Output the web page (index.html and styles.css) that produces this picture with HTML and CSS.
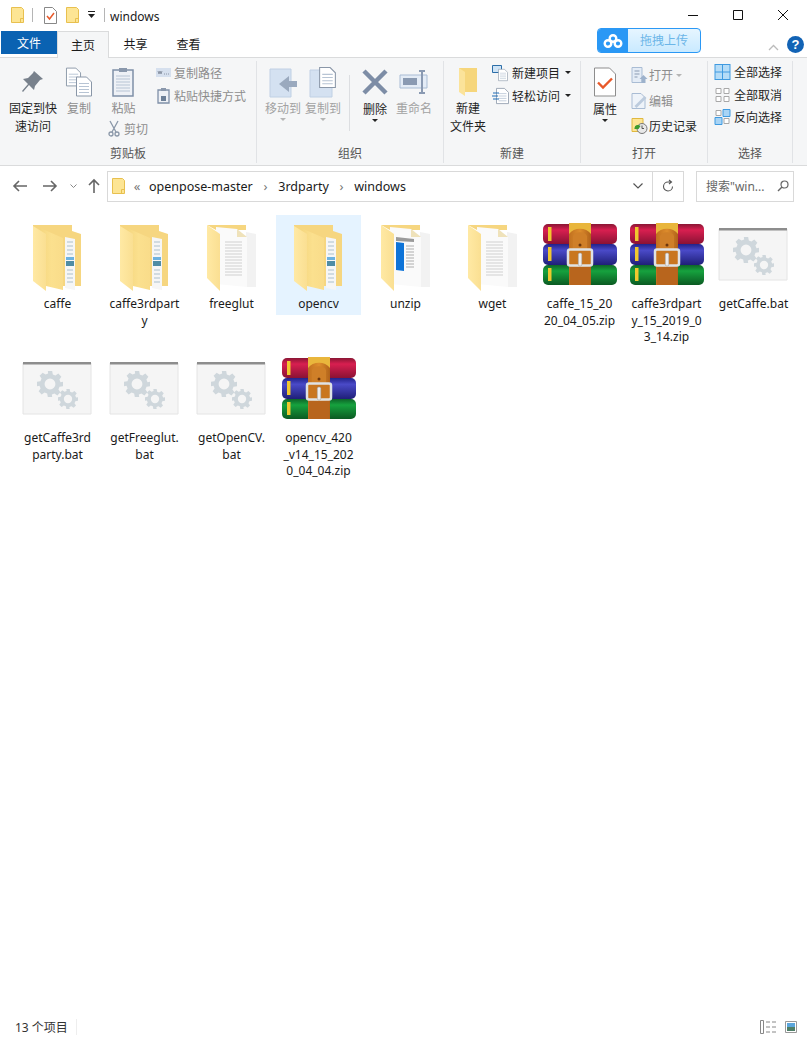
FILE: index.html
```html
<!DOCTYPE html>
<html lang="zh">
<head>
  <meta charset="UTF-8" />
  <title>windows</title>
  <link rel="stylesheet" href="styles.css">
</head>
<body>
<svg class="defs" width="0" height="0">
  <defs>
    <linearGradient id="gFolder" x1="0" y1="0" x2="1" y2="0"><stop offset="0" stop-color="#ffe9a4"/><stop offset="1" stop-color="#fadf92"/></linearGradient>
    <linearGradient id="gPanel" x1="0" y1="0" x2="1" y2="0"><stop offset="0" stop-color="#f5d67e"/><stop offset=".5" stop-color="#fbe08e"/><stop offset="1" stop-color="#f9dc8a"/></linearGradient>
    <linearGradient id="gRed" x1="0" y1="0" x2="0" y2="1"><stop offset="0" stop-color="#8a1634"/><stop offset=".3" stop-color="#d81f50"/><stop offset="1" stop-color="#8a1234"/></linearGradient>
    <linearGradient id="gBlue" x1="0" y1="0" x2="0" y2="1"><stop offset="0" stop-color="#22228a"/><stop offset=".3" stop-color="#4a4ac8"/><stop offset="1" stop-color="#1f1f78"/></linearGradient>
    <linearGradient id="gGreen" x1="0" y1="0" x2="0" y2="1"><stop offset="0" stop-color="#0e6428"/><stop offset=".3" stop-color="#16a23e"/><stop offset="1" stop-color="#0b5a22"/></linearGradient>
    <linearGradient id="gBelt" x1="0" y1="0" x2="1" y2="0"><stop offset="0" stop-color="#c0701f"/><stop offset=".5" stop-color="#dd8c2c"/><stop offset="1" stop-color="#b0621a"/></linearGradient>

    <symbol id="tinyFolder" viewBox="0 0 13 16">
      <path d="M.5.5h10l2 2v13H.5z" fill="#fde594" stroke="#e8c04f"/>
      <path d="M9.5 15.5v-4h3" fill="none" stroke="#e8c04f"/>
    </symbol>

    <symbol id="folderDocs" viewBox="0 0 74 64">
      <path d="M12 3h39v6l9 3v52H42L12 50z" fill="#f6d680"/>
      <path d="M44 15l10 2v51l-10-2z" fill="#f6f6f6"/>
      <path d="M46 20h6M46 24h6M46 28h6M46 32h6M46 48h6M46 52h6M46 56h6M46 60h6" stroke="#c5d2da" stroke-width="1.300"/>
      <path d="M45 35h8v3h-8z" fill="#6db2e0"/>
      <path d="M45 39h8v5h-8z" fill="#4f8ca4"/>
      <path d="M19 6l23 10v52l-17-4z" fill="url(#gPanel)"/>
      <path d="M12 4l13 8v57L12 59z" fill="url(#gFolder)"/>
    </symbol>

    <symbol id="folderPlain" viewBox="0 0 74 64">
      <path d="M12 3h39v5h-30z" fill="#f6d680"/>
      <path d="M51 10l10 2v53H51z" fill="#f2f2f2"/>
      <path d="M21 5l21 2 10 8v50l-31-3z" fill="#fafafa"/>
      <path d="M42 7v8h10z" fill="#efe2ba"/>
      <path d="M30 20h17M30 23h17M30 26h17M30 29h17M30 32h17M30 35h17M30 38h17M30 41h17M30 44h17M30 47h17M30 50h17M30 53h17" stroke="#cfcfcf" stroke-width="1.100"/>
      <path d="M12 3l13 9v57L12 56z" fill="url(#gFolder)"/>
    </symbol>

    <symbol id="folderBlue" viewBox="0 0 74 64">
      <path d="M12 3h39v5h-30z" fill="#f6d680"/>
      <path d="M51 10l10 2v53H51z" fill="#f2f2f2"/>
      <path d="M21 5l21 2 10 8v50l-31-3z" fill="#fafafa"/>
      <path d="M42 7v8h10z" fill="#efe2ba"/>
      <path d="M27 15l18 2v3l-18-1z" fill="#9a9a9a"/>
      <path d="M27 20l8 1v28l-8-1z" fill="#0e74d8"/>
      <path d="M37 24h8M37 27h8M37 30h8M37 33h8M37 36h8M37 39h8M37 42h8M37 45h8" stroke="#c8c8c8" stroke-width="1.300"/>
      <path d="M12 3l13 9v57L12 56z" fill="url(#gFolder)"/>
    </symbol>

    <symbol id="rar" viewBox="0 0 74 64">
      <rect x="0" y="2" width="74" height="20" rx="5" fill="url(#gRed)"/>
      <rect x="0" y="22" width="74" height="21" rx="5" fill="url(#gBlue)"/>
      <rect x="0" y="43" width="74" height="20" rx="5" fill="url(#gGreen)"/>
      <path d="M5 5h3.500v14H5zM5 25h3.500v14H5zM5 46h3.500v13H5z" fill="#f0c82e"/>
      <path d="M26 1h22v62H26z" fill="url(#gBelt)"/>
      <path d="M26 1h22v11c-5-7-17-7-22 0z" fill="#e9b63c"/>
      <path d="M30 14c2-5 12-5 14 0v13H30z" fill="#cf7f28"/>
      <circle cx="37" cy="23" r="1.500" fill="#6d360c"/>
      <rect x="25" y="27.500" width="24" height="16" rx="2" fill="#c9761f" stroke="#dfe2e4" stroke-width="2.500"/>
      <rect x="35.300" y="31" width="3.500" height="13" rx="1.500" fill="#ececec" stroke="#9a9a9a" stroke-width=".5"/>
      <path d="M27 45h20v18H27z" fill="#b8651d"/>
    </symbol>

    <symbol id="gear" viewBox="-12 -12 24 24">
      <path d="M-2-12h4l.6 3.2 2.4 1 2.7-1.8 2.8 2.8-1.8 2.700 1 2.400L12-2v4l-3.200.6-1 2.400 1.800 2.700-2.800 2.800-2.700-1.800-2.400 1L2 12h-4l-.6-3.200-2.400-1-2.700 1.800-2.800-2.800 1.800-2.700-1-2.400L-12 2v-4l3.200-.6 1-2.400-1.800-2.700 2.800-2.800 2.700 1.800 2.400-1zM0-5a5 5 0 1 0 0 10A5 5 0 0 0 0-5z" fill="#cfd7dc" fill-rule="evenodd"/>
    </symbol>

    <symbol id="bat" viewBox="0 0 74 64">
      <path d="M2 7h68v51H2z" fill="#f5f5f5" stroke="#e4e4e4"/>
      <path d="M2 6h68v2.500H2z" fill="#8d8d8d"/>
      <use href="#gear" x="16" y="15" width="26" height="26"/>
      <use href="#gear" x="37" y="33" width="20" height="20"/>
    </symbol>

    <symbol id="paper" viewBox="0 0 16 20">
      <path d="M.5.5h10l5 5v14H.5z" fill="#fff" stroke="#8a97a8"/>
      <path d="M3 7h10M3 10h10M3 13h10M3 16h10" stroke="#b7c4d4"/>
    </symbol>
  </defs>
</svg>

<header class="titlebar">
  <svg class="ml-11" width="13" height="16"><use href="#tinyFolder"/></svg>
  <span class="tb-sep ml-8"></span>
  <svg class="ml-11" width="13" height="17" viewBox="0 0 13 17"><path d="M.5.5h8l4 4v12H.5z" fill="#fff" stroke="#888"/><path d="M3 9l2.500 3L10 6" fill="none" stroke="#e8592a" stroke-width="1.500"/></svg>
  <svg class="ml-9" width="13" height="16"><use href="#tinyFolder"/></svg>
  <svg class="ml-8" width="9" height="8" viewBox="0 0 9 8"><path d="M1 0h7v1H1zM1 3h7L4.500 7z" fill="#222"/></svg>
  <span class="tb-sep ml-8"></span>
  <span class="tb-title">windows</span>
  <div class="winctl">
    <svg width="10" height="10" viewBox="0 0 10 10"><path d="M0 5.500h10" stroke="#111"/></svg>
    <svg width="10" height="10" viewBox="0 0 10 10"><path d="M.5.500h9v9h-9z" fill="none" stroke="#111"/></svg>
    <svg width="10" height="10" viewBox="0 0 10 10"><path d="M0 0l10 10M10 0L0 10" stroke="#111"/></svg>
  </div>
</header>

<nav class="tabbar">
  <span class="tab tab-file">文件</span>
  <span class="tab tab-active">主页</span>
  <span class="tab">共享</span>
  <span class="tab">查看</span>
  <div class="tabbar-right">
    <div class="cloud">
      <span class="cloud-logo">
        <svg width="20" height="14" viewBox="0 0 20 14"><g fill="none" stroke="#fff" stroke-width="2.400"><circle cx="10" cy="4.500" r="3.300"/><circle cx="5" cy="9.500" r="3.300"/><circle cx="15" cy="9.500" r="3.300"/></g></svg>
      </span>
      <span class="cloud-text">拖拽上传</span>
    </div>
    <svg class="collapse" width="11" height="7" viewBox="0 0 11 7"><path d="M1 6l4.500-4.500L10 6" fill="none" stroke="#bbb" stroke-width="1.300"/></svg>
    <span class="help">?</span>
  </div>
</nav>

<section class="ribbon">
  <div class="group g-clip">
    <div class="group-body">
      <div class="big w-50">
        <svg class="big-ic" width="26" height="26" viewBox="0 0 26 26"><path d="M14 2l9 8-3 1-5 6-1 4-5-5-6 7-1-1 6-7-5-5 5-1 5-5z" fill="#78818c"/></svg>
        <span class="big-label dark">固定到快<br>速访问</span>
      </div>
      <div class="big w-42">
        <svg class="big-ic" width="26" height="30" viewBox="0 0 26 30"><use href="#paper" width="15" height="20"/><use href="#paper" x="10" y="9" width="16" height="21"/></svg>
        <span class="big-label">复制</span>
      </div>
      <div class="paste-col">
        <div class="big">
          <svg class="big-ic" width="22" height="30" viewBox="0 0 22 30"><path d="M1 3h20v26H1z" fill="#eef1f6" stroke="#7f90a8" stroke-width="1.500"/><path d="M7 1h8v4H7z" fill="#8a98ac"/><path d="M4 9h14M4 12h14M4 15h14M4 18h14M4 21h14M4 24h14" stroke="#b7c4d4"/></svg>
          <span class="big-label">粘贴</span>
        </div>
        <div class="small cut">
          <svg width="12" height="16" viewBox="0 0 12 16"><path d="M2 0l6 11M10 0L4 11" stroke="#8a97a8" stroke-width="1.300"/><circle cx="3" cy="13" r="2" fill="none" stroke="#8a97a8" stroke-width="1.300"/><circle cx="9" cy="13" r="2" fill="none" stroke="#8a97a8" stroke-width="1.300"/></svg>
          <span>剪切</span>
        </div>
      </div>
      <div class="small-col clip-small">
        <div class="small">
          <svg width="15" height="9" viewBox="0 0 15 9"><path d="M0 0h15v9H0z" fill="#d6e0ee"/><path d="M2 3l1 3 1-3 1 3 1-3M8 6h1M10 6h1M12 6h1" stroke="#7a8494" fill="none" stroke-width=".8"/></svg>
          <span>复制路径</span>
        </div>
        <div class="small">
          <svg width="13" height="16" viewBox="0 0 13 16"><path d="M1 2h11v13H1z" fill="#eef1f6" stroke="#7f90a8" stroke-width="1.300"/><path d="M4 0h5v3H4z" fill="#8a98ac"/><path d="M4 8h5v5H4z" fill="#6d8098"/></svg>
          <span>粘贴快捷方式</span>
        </div>
      </div>
    </div>
    <div class="group-label">剪贴板</div>
  </div>

  <div class="group g-org">
    <div class="group-body">
      <div class="big w-40">
        <svg class="big-ic" width="27" height="30" viewBox="0 0 27 30"><path d="M0 2h21v28H0z" fill="#d4e1f1" stroke="#c0d0e4"/><path d="M27 14h-8V9l-10 8 10 8v-5h8z" fill="#9aa9be"/></svg>
        <span class="big-label muted">移动到</span>
        <i class="caret caret-grey"></i>
      </div>
      <div class="big w-40">
        <svg class="big-ic" width="27" height="30" viewBox="0 0 27 30"><path d="M0 3h22v27H0z" fill="#d4e1f1" stroke="#c0d0e4"/><use href="#paper" x="9" y="0" width="17" height="21"/></svg>
        <span class="big-label muted">复制到</span>
        <i class="caret caret-grey"></i>
      </div>
      <span class="inner-sep"></span>
      <div class="big w-50">
        <svg class="big-ic" width="26" height="26" viewBox="0 0 26 26"><path d="M2 2l22 22M24 2L2 24" stroke="#7d8da6" stroke-width="4.500"/></svg>
        <span class="big-label dark lift">删除</span>
        <i class="caret"></i>
      </div>
      <div class="big w-28">
        <svg class="big-ic" width="28" height="24" viewBox="0 0 28 24"><path d="M0 5h27v13H0z" fill="#e4ecf6" stroke="#a9bcd4"/><path d="M3 8h14v7H3z" fill="#8a9ab2"/><path d="M19 1h6M19 23h6M22 1v22" stroke="#8a9ab2" stroke-width="2"/></svg>
        <span class="big-label muted">重命名</span>
      </div>
    </div>
    <div class="group-label">组织</div>
  </div>

  <div class="group g-new">
    <div class="group-body">
      <div class="big w-48">
        <svg class="big-ic" width="19" height="28" viewBox="0 0 19 28"><path d="M0 0h18v24H4z" fill="#f6d67c"/><path d="M0 0l6 4v24L0 24z" fill="#fbe39a"/></svg>
        <span class="big-label dark">新建<br>文件夹</span>
      </div>
      <div class="small-col new-small">
        <div class="small dark">
          <svg width="17" height="16" viewBox="0 0 17 16"><path d="M.5.500h9v7h-9z" fill="#cfe4f6" stroke="#2c6ea8"/><use href="#paper" x="6" y="4" width="10" height="12"/></svg>
          <span>新建项目</span><i class="caret"></i>
        </div>
        <div class="small dark">
          <svg width="17" height="16" viewBox="0 0 17 16"><use href="#paper" x="4" y="0" width="13" height="16"/><path d="M1 5h6M0 8h6M1 11h6" stroke="#1f6cb6"/></svg>
          <span>轻松访问</span><i class="caret"></i>
        </div>
      </div>
    </div>
    <div class="group-label">新建</div>
  </div>

  <div class="group g-open">
    <div class="group-body">
      <div class="big w-48">
        <svg class="big-ic" width="22" height="29" viewBox="0 0 22 29"><path d="M.5.500h15l6 6v22H.5z" fill="#fff" stroke="#8d8d8d"/><path d="M4 15l5 5 9-9" fill="none" stroke="#e8592a" stroke-width="2.400"/></svg>
        <span class="big-label dark lift">属性</span>
        <i class="caret"></i>
      </div>
      <div class="small-col open-small">
        <div class="small">
          <svg width="16" height="16" viewBox="0 0 16 16"><path d="M.5.500h10v15H.5z" fill="#e4ecf6" stroke="#a9bcd4"/><path d="M3 4h5M3 7h5M3 10h3" stroke="#8a9ab2"/><path d="M12 8l4 4h-2v4h-4v-4H8z" fill="#9db2cc"/></svg>
          <span>打开</span><i class="caret caret-grey"></i>
        </div>
        <div class="small">
          <svg width="16" height="16" viewBox="0 0 16 16"><path d="M.5.500h9l4 4v11H.5z" fill="#eef3f9" stroke="#a9bcd4"/><path d="M3 13L13 3l2 2L5 15z" fill="#bccbdd"/></svg>
          <span>编辑</span>
        </div>
        <div class="small dark">
          <svg width="16" height="16" viewBox="0 0 16 16"><path d="M.5.500h11v13H.5z" fill="#fde594" stroke="#e0b83f"/><circle cx="10.500" cy="10.500" r="5" fill="#e8e8e8" stroke="#777"/><path d="M10.500 7.500v3h2" fill="none" stroke="#555"/><path d="M3 10a3.500 3.500 0 0 1 6-2l-2 3H3z" fill="#3d9a2f"/></svg>
          <span>历史记录</span>
        </div>
      </div>
    </div>
    <div class="group-label">打开</div>
  </div>

  <div class="group g-select">
    <div class="group-body">
      <div class="small-col select-small">
        <div class="small dark">
          <svg width="16" height="16" viewBox="0 0 16 16"><path d="M0 0h16v16H0z" fill="#3f9ae0"/><path d="M1 1h6.500v6.500H1zM8.500 1H15v6.500H8.500zM1 8.500h6.500V15H1zM8.500 8.500H15V15H8.500z" fill="#b5dcf7"/></svg>
          <span>全部选择</span>
        </div>
        <div class="small dark">
          <svg width="16" height="16" viewBox="0 0 16 16"><path d="M1.500 1.500h5v5h-5zM9.500 1.500h5v5h-5zM1.500 9.500h5v5h-5zM9.500 9.500h5v5h-5z" fill="#fff" stroke="#a8a8a8"/></svg>
          <span>全部取消</span>
        </div>
        <div class="small dark">
          <svg width="16" height="16" viewBox="0 0 16 16"><path d="M1.500 1.500h5v5h-5zM9.500 9.500h5v5h-5z" fill="#fff" stroke="#a8a8a8"/><path d="M8.500.500h7v7h-7zM.500 8.500h7v7h-7z" fill="#a8d4f5" stroke="#3f9ae0"/></svg>
          <span>反向选择</span>
        </div>
      </div>
    </div>
    <div class="group-label">选择</div>
  </div>
</section>

<div class="addressrow">
  <svg class="nav-back" width="14" height="12" viewBox="0 0 14 12"><path d="M6 1L1 6l5 5M1 6h13" fill="none" stroke="#666" stroke-width="1.600"/></svg>
  <svg class="nav-fwd" width="14" height="12" viewBox="0 0 14 12"><path d="M8 1l5 5-5 5M13 6H0" fill="none" stroke="#666" stroke-width="1.600"/></svg>
  <svg class="nav-down" width="7" height="5" viewBox="0 0 7 5"><path d="M.5.500l3 3 3-3" fill="none" stroke="#888"/></svg>
  <svg class="nav-up" width="12" height="14" viewBox="0 0 12 14"><path d="M1 6l5-5 5 5M6 1v13" fill="none" stroke="#666" stroke-width="1.600"/></svg>
  <div class="addressbox">
    <svg width="13" height="16"><use href="#tinyFolder"/></svg>
    <span class="crumb-sep chev-l">«</span>
    <span class="crumb">openpose-master</span>
    <span class="crumb-sep">›</span>
    <span class="crumb">3rdparty</span>
    <span class="crumb-sep">›</span>
    <span class="crumb">windows</span>
    <svg class="addr-drop" width="10" height="6" viewBox="0 0 10 6"><path d="M.5.500L5 5 9.500.500" fill="none" stroke="#555" stroke-width="1.200"/></svg>
    <span class="addr-refresh">
      <svg width="12" height="13" viewBox="0 0 12 13"><path d="M10.500 6.500A4.500 4.500 0 1 1 6 2h3M7 0l2.500 2L7 4" fill="none" stroke="#555" stroke-width="1.100"/></svg>
    </span>
  </div>
  <div class="searchbox">
    <span>搜索"win...</span>
    <svg width="12" height="12" viewBox="0 0 12 12"><circle cx="7.500" cy="4.500" r="3.500" fill="none" stroke="#666" stroke-width="1.200"/><path d="M5 7l-4 4" stroke="#666" stroke-width="1.400"/></svg>
  </div>
</div>

<main class="files">
  <div class="tile"><svg class="tile-ic"><use href="#folderDocs"/></svg><span>caffe</span></div>
  <div class="tile"><svg class="tile-ic"><use href="#folderDocs"/></svg><span>caffe3rdpart<br>y</span></div>
  <div class="tile"><svg class="tile-ic"><use href="#folderPlain"/></svg><span>freeglut</span></div>
  <div class="tile tile-hover"><svg class="tile-ic"><use href="#folderDocs"/></svg><span>opencv</span></div>
  <div class="tile"><svg class="tile-ic"><use href="#folderBlue"/></svg><span>unzip</span></div>
  <div class="tile"><svg class="tile-ic"><use href="#folderPlain"/></svg><span>wget</span></div>
  <div class="tile"><svg class="tile-ic"><use href="#rar"/></svg><span>caffe_15_20<br>20_04_05.zip</span></div>
  <div class="tile"><svg class="tile-ic"><use href="#rar"/></svg><span>caffe3rdpart<br>y_15_2019_0<br>3_14.zip</span></div>
  <div class="tile"><svg class="tile-ic"><use href="#bat"/></svg><span>getCaffe.bat</span></div>
  <div class="tile"><svg class="tile-ic"><use href="#bat"/></svg><span>getCaffe3rd<br>party.bat</span></div>
  <div class="tile"><svg class="tile-ic"><use href="#bat"/></svg><span>getFreeglut.<br>bat</span></div>
  <div class="tile"><svg class="tile-ic"><use href="#bat"/></svg><span>getOpenCV.<br>bat</span></div>
  <div class="tile"><svg class="tile-ic"><use href="#rar"/></svg><span>opencv_420<br>_v14_15_202<br>0_04_04.zip</span></div>
</main>

<footer class="statusbar">
  <span>13 个项目</span>
  <span class="status-sep"></span>
  <div class="status-views">
    <svg width="17" height="14" viewBox="0 0 17 14"><path d="M.5.500h3v13h-3z" fill="#fff" stroke="#888"/><path d="M6 2h4M12 2h4M6 7h4M12 7h4M6 12h4M12 12h4" stroke="#888"/></svg>
    <svg width="12" height="12" viewBox="0 0 12 12"><path d="M.5.500h11v11H.5z" fill="#fff" stroke="#999"/><path d="M2 2h8v4H2z" fill="#5ba6dc"/><path d="M2 6h8v4H2z" fill="#4f7f68"/></svg>
  </div>
</footer>
</body>
</html>
```

FILE: styles.css
```css
* { box-sizing: border-box; }
html, body { margin: 0; height: 100%; }
body {
  width: 807px; height: 1040px; overflow: hidden; background: #fff; color: #1a1a1a;
  font-family: "Noto Sans", "Noto Sans CJK SC", sans-serif; font-size: 12px;
  display: flex; flex-direction: column;
}
svg { display: block; flex: none; overflow: visible; }
symbol { overflow: visible; }
i { display: block; }
.defs { position: absolute; }

/* title bar */
.titlebar { height: 31px; display: flex; align-items: center; padding-bottom: 1px; }
.ml-8 { margin-left: 8px; }
.ml-9 { margin-left: 9px; }
.ml-11 { margin-left: 11px; }
.tb-sep { width: 1px; height: 14px; background: #b5b5b5; }
.tb-title { margin: 2px 0 0 5px; font-size: 12px; }
.winctl { margin-left: auto; display: flex; gap: 35px; padding-right: 19px; }

/* tabs */
.tabbar { height: 27px; display: flex; border-bottom: 1px solid #dadbdc; padding-left: 1px; }
.tab { width: 53px; height: 26px; display: flex; align-items: center; justify-content: center; font-size: 12px; }
.tab-file { width: 56px; height: 23px; background: #0a62b2; color: #fff; }
.tab-active { width: 52px; height: 27px; background: #f5f6f7; border: 1px solid #dadbdc; border-bottom: 0; }
.tabbar-right { margin-left: auto; display: flex; align-items: flex-start; }
.cloud {
  width: 104px; height: 25px; margin-top: -3px; display: flex; overflow: hidden;
  border: 1px solid #2a98f5; border-radius: 4px; background: linear-gradient(#e6f5ff, #c9eaff);
}
.cloud-logo { width: 30px; background: #2a98f5; display: flex; align-items: center; justify-content: center; }
.cloud-text { flex: 1; text-align: center; line-height: 23px; color: #6cb6e8; font-size: 12px; }
.collapse { margin: 13px 0 0 67px; }
.help {
  width: 17px; height: 17px; margin: 5px 3px 0 8px; border-radius: 50%; background: #1263b5; color: #fff;
  font: bold 13px/17px "Liberation Sans", sans-serif; text-align: center;
}

/* ribbon */
.ribbon { height: 108px; background: #f5f6f7; border-bottom: 1px solid #dadbdc; display: flex; flex: none; }
.group { display: flex; flex-direction: column; border-right: 1px solid #e1e3e6; margin: 3px 0 2px; }
.g-clip { width: 257px; }
.g-org { width: 187px; }
.g-new { width: 137px; }
.g-open { width: 127px; }
.g-select { width: 85px; }
.group-body { height: 83px; flex: none; display: flex; align-items: flex-start; }
.group-label { height: 19px; text-align: center; line-height: 20px; color: #555; font-size: 12px; }
.g-clip .group-body { padding-left: 8px; }
.g-org .group-body { padding-left: 6px; }

.big { display: flex; flex-direction: column; align-items: center; flex: none; margin-top: 5px; }
.big-ic { height: 32px; }
.big-label { margin-top: 2px; line-height: 18px; text-align: center; color: #8d8d8d; white-space: nowrap; font-size: 12px; }
.big-label.dark { color: #1f1f1f; }
.big-label.muted { color: #a2a2a2; }
.big-label.lift { margin-top: 3px; }
.w-50 { width: 50px; }
.w-42 { width: 42px; }
.w-40 { width: 40px; }
.w-28 { width: 28px; }
.w-48 { width: 48px; }
.caret { width: 0; height: 0; border: 3px solid transparent; border-top: 3px solid #222; border-bottom: 0; }
.caret-grey { border-top-color: #b5b5b5; }
.inner-sep { width: 1px; height: 56px; margin: 14px 0 0 6px; background: #dcdee1; }

.paste-col { width: 47px; display: flex; flex-direction: column; align-items: center; flex: none; }
.small-col { display: flex; flex-direction: column; flex: none; }
.small { display: flex; align-items: center; gap: 3px; height: 23px; color: #8d8d8d; white-space: nowrap; font-size: 12px; }
.small.dark { color: #1f1f1f; }
.small svg { width: 17px; }
.small .caret { margin-left: 2px; }
.cut { margin: -1px 0 0 8px; align-self: flex-start; gap: 4px; }
.cut svg { width: 12px; }
.clip-small { margin-left: 8px; }
.clip-small .small { gap: 2px; }
.open-small { margin: 2px 0 0 2px; gap: 1.500px; }
.open-small .small { height: 24px; gap: 1px; }
.select-small { margin-left: 6px; }
.select-small .small { height: 22.500px; }

/* address */
.addressrow { height: 40px; flex: none; display: flex; align-items: center; padding-left: 13px; }
.nav-fwd { margin-left: 16px; }
.nav-down { margin-left: 13px; }
.nav-up { margin-left: 11px; }
.addressbox {
  width: 577px; height: 31px; margin-left: 7px; display: flex; align-items: center; padding-left: 4px;
  border: 1px solid #d9d9d9; font-size: 12px;
}
.crumb { color: #1a1a1a; font-size: 12.500px; }
.crumb-sep { width: 25.500px; text-align: center; color: #777; font-size: 13px; }
.chev-l { width: 24px; }
.addr-drop { margin-left: auto; margin-right: 9px; }
.addr-refresh { width: 31px; height: 29px; border-left: 1px solid #d9d9d9; display: flex; align-items: center; justify-content: center; }
.searchbox {
  width: 98px; height: 31px; margin-left: 12px; padding: 0 4px 0 9px; display: flex; align-items: center; justify-content: space-between;
  border: 1px solid #d9d9d9; color: #666; font-size: 12px;
}

/* files */
.files {
  flex: 1; display: grid; grid-template-columns: repeat(9, 85px); column-gap: 2px;
  grid-auto-rows: 134px; padding: 9px 0 0 15px; align-content: start;
}
.tile { height: fit-content; padding: 7px 0 2px; text-align: center; line-height: 16.500px; font-size: 12px; white-space: nowrap; color: #1a1a1a; }
.tile-ic { width: 74px; height: 64px; margin: 0 auto 10px; }
.tile-hover { background: #e5f3ff; }

/* status */
.statusbar { height: 26px; flex: none; display: flex; align-items: center; padding: 0 10px 0 15px; color: #333; font-size: 12px; }
.status-sep { width: 1px; height: 16px; background: #eee; margin-left: 8px; }
.status-views { margin-left: auto; display: flex; align-items: center; gap: 8px; }
```
